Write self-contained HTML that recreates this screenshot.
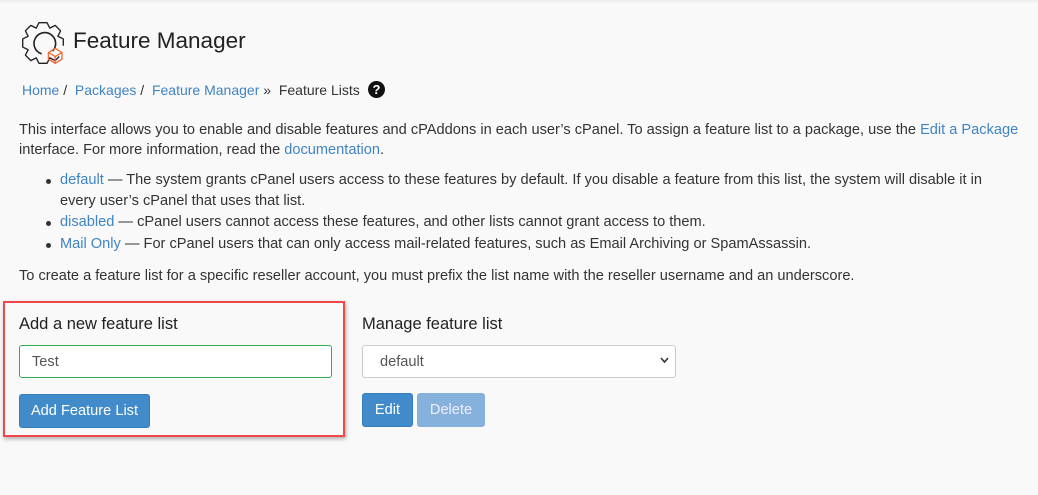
<!DOCTYPE html>
<html><head><meta charset="utf-8"><style>
body{margin:0;width:1038px;height:495px;background:#f9f9f9;font-family:"Liberation Sans",sans-serif;color:#333;font-size:14.6px;position:relative;overflow:hidden}
.a{position:absolute;white-space:nowrap}
a{color:#3f84c6;text-decoration:none}
.top{position:absolute;left:0;top:0;width:1038px;height:4px;background:linear-gradient(#eee,#f9f9f9)}
.btn{position:absolute;background:#428bca;border:1px solid #357ebd;border-radius:3px;color:#fff;font-size:14.6px;text-align:center;box-sizing:border-box}
.inp{position:absolute;background:#fff;border-radius:3px;box-sizing:border-box;font-size:14.6px;color:#555}
.dot{position:absolute;width:5px;height:5px;border-radius:50%;background:#333}
</style></head><body>
<div class="top"></div>
<svg class="a" style="left:20px;top:20px" width="46" height="46" viewBox="4 6 34 34">
<path d="M33 33 L30 36 L26 34 L24 38 L18 38 L16 34 L12 36 L8 32 L10 28 L6 26 L6 20 L10 18 L8 14 L12 10 L16 12 L18 8 L24 8 L26 12 L30 10 L34 14 L32 18 L36 20 L36 25" fill="none" stroke="#222" stroke-width="1" stroke-linejoin="round"/>
<path d="M28 29 A8 8 0 1 0 20 31" fill="none" stroke="#222" stroke-width="1.2"/>
<path d="M30 27 L35 30 L35 35 L30 38 L25 35 L25 30 Z M25 30 L30 33 L35 30 M30 33 L30 38" fill="none" stroke="#f06a3a" stroke-width="1"/>
</svg>
<div class="a" style="left:73px;top:28px;font-size:22.5px;color:#222">Feature Manager</div>
<div class="a" style="left:22px;top:82px;font-size:14px"><a>Home</a> / &nbsp;<a>Packages</a> / &nbsp;<a>Feature Manager</a> » &nbsp;Feature Lists</div>
<div class="a" style="left:368px;top:81px;width:17px;height:17px;border-radius:50%;background:#111;color:#fff;font-weight:bold;font-size:13px;text-align:center;line-height:17px">?</div>
<div class="a" style="left:19px;top:122px">This interface allows you to enable and disable features and cPAddons in each user’s cPanel. To assign a feature list to a package, use the <a>Edit a Package</a></div>
<div class="a" style="left:19px;top:142px">interface. For more information, read the <a>documentation</a>.</div>
<div class="dot" style="left:46px;top:179px"></div>
<div class="a" style="left:60px;top:172px"><a>default</a> — The system grants cPanel users access to these features by default. If you disable a feature from this list, the system will disable it in</div>
<div class="a" style="left:60px;top:193px">every user’s cPanel that uses that list.</div>
<div class="dot" style="left:46px;top:221px"></div>
<div class="a" style="left:60px;top:214px"><a>disabled</a> — cPanel users cannot access these features, and other lists cannot grant access to them.</div>
<div class="dot" style="left:46px;top:243px"></div>
<div class="a" style="left:60px;top:236px"><a>Mail Only</a> — For cPanel users that can only access mail-related features, such as Email Archiving or SpamAssassin.</div>
<div class="a" style="left:19px;top:268px">To create a feature list for a specific reseller account, you must prefix the list name with the reseller username and an underscore.</div>
<div class="a" style="left:3px;top:301px;width:338px;height:132px;border:2px solid #f0474b;box-shadow:1px 2px 4px rgba(0,0,0,.3)"></div>
<div class="a" style="left:19px;top:315px;font-size:16.5px;color:#222">Add a new feature list</div>
<div class="inp" style="left:19px;top:345px;width:313px;height:33px;border:1px solid #2fae54;padding:8px 12px">Test</div>
<div class="btn" style="left:19px;top:394px;width:131px;height:34px;line-height:32px">Add Feature List</div>
<div class="a" style="left:362px;top:315px;font-size:16.5px;color:#222">Manage feature list</div>
<div class="inp" style="left:362px;top:345px;width:314px;height:33px;border:1px solid #ccc;padding:8px 17px">default</div>
<svg class="a" style="left:660px;top:357px" width="9" height="7"><path d="M1 1 L4.5 5 L8 1" fill="none" stroke="#333" stroke-width="1.6"/></svg>
<div class="btn" style="left:362px;top:393px;width:51px;height:34px;line-height:32px">Edit</div>
<div class="btn" style="left:417px;top:393px;width:68px;height:34px;line-height:32px;background:#86b1dc;border-color:#86b1dc;color:#eef">Delete</div>
</body></html>
